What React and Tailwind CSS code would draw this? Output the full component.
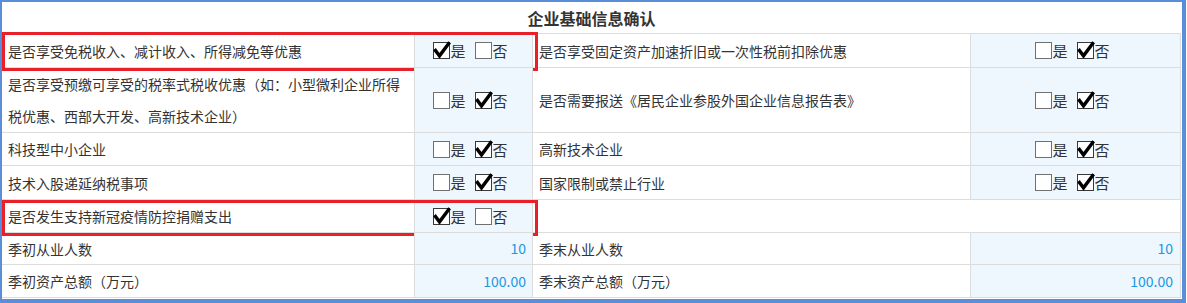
import React from 'react';

const font = "font-['Microsoft_YaHei','Noto_Sans_CJK_SC',sans-serif]";

// single checkbox, drawn like the old IE style box
const Box = ({ checked }) => (
  <span className={`relative inline-block w-[17px] h-[17px] border bg-white ${checked ? 'border-[#3a3a3a]' : 'border-[#707070]'}`}>
    {checked && (
      <svg className="absolute -left-[1px] -top-[1px] overflow-visible" width="17" height="17" viewBox="0 0 17 17">
        <path d="M2.5 8.5 L6.5 13.8 L15.6 1.6" fill="none" stroke="#000" strokeWidth="3.4" strokeLinecap="square" strokeLinejoin="miter" />
      </svg>
    )}
  </span>
);

const YesNo = ({ yes }) => (
  <div className="flex items-center justify-center">
    <Box checked={yes} />
    <span className="ml-[1px] mr-[8px] w-[16px] text-[15px] leading-none">是</span>
    <Box checked={!yes} />
    <span className="ml-[1px] w-[16px] text-[15px] leading-none">否</span>
  </div>
);

const Label = ({ w, children }) => (
  <div className={`${w} h-full border-r border-b border-[#dcdcdc] pl-[6px] flex items-center leading-[32px]`}>
    {children}
  </div>
);

const Check = ({ w, yes }) => (
  <div className={`${w} h-full border-r border-b border-[#dcdcdc] bg-[#eef6fe] flex items-center justify-center pr-[6px]`}>
    <YesNo yes={yes} />
  </div>
);

const Num = ({ w, value, pr }) => (
  <div className={`${w} h-full border-r border-b border-[#dcdcdc] bg-[#eef6fe] flex items-center justify-end ${pr} text-[#1b98e0]`}>
    {value}
  </div>
);

const Row = ({ h, children, red }) => (
  <div className={`relative flex ${h}`}>
    {children}
    {red}
  </div>
);

export default function App() {
  return (
    <div className={`w-[1186px] h-[303px] bg-white border-[#5a8fd8] border-l-2 border-t-2 border-r-4 border-b-4 pr-[1px] pb-[1px] text-[14px] text-[#333] ${font}`}>
      <div className="w-[1179px]">
        <div className="h-[32px] border-b border-[#dcdcdc] flex items-center justify-center text-[16px] font-bold text-[#333]">
          企业基础信息确认
        </div>

        <Row h="h-[34px]" red={<div className="absolute left-0 -top-[2px] w-[536px] h-[39px] border-[3px] border-[#e8202a] pointer-events-none" />}>
          <Label w="w-[413px]">是否享受免税收入、减计收入、所得减免等优惠</Label>
          <Check w="w-[118px]" yes />
          <Label w="w-[438px]">是否享受固定资产加速折旧或一次性税前扣除优惠</Label>
          <Check w="w-[210px]" />
        </Row>

        <Row h="h-[65px]">
          <Label w="w-[413px]">
            <span>是否享受预缴可享受的税率式税收优惠（如：小型微利企业所得<br />税优惠、西部大开发、高新技术企业）</span>
          </Label>
          <Check w="w-[118px]" />
          <Label w="w-[438px]">是否需要报送《居民企业参股外国企业信息报告表》</Label>
          <Check w="w-[210px]" />
        </Row>

        <Row h="h-[33px]">
          <Label w="w-[413px]">科技型中小企业</Label>
          <Check w="w-[118px]" />
          <Label w="w-[438px]">高新技术企业</Label>
          <Check w="w-[210px]" />
        </Row>

        <Row h="h-[34px]">
          <Label w="w-[413px]">技术入股递延纳税事项</Label>
          <Check w="w-[118px]" />
          <Label w="w-[438px]">国家限制或禁止行业</Label>
          <Check w="w-[210px]" />
        </Row>

        <Row h="h-[33px]" red={<div className="absolute left-0 top-0 w-[536px] h-[36px] border-[3px] border-[#e8202a] pointer-events-none" />}>
          <Label w="w-[413px]">是否发生支持新冠疫情防控捐赠支出</Label>
          <Check w="w-[118px]" yes />
          <div className="w-[648px] h-full border-r border-b border-[#dcdcdc]" />
        </Row>

        <Row h="h-[32px]">
          <Label w="w-[413px]">季初从业人数</Label>
          <Num w="w-[118px]" value="10" pr="pr-[6px]" />
          <Label w="w-[438px]">季末从业人数</Label>
          <Num w="w-[210px]" value="10" pr="pr-[7px]" />
        </Row>

        <Row h="h-[33px]">
          <Label w="w-[413px]">季初资产总额（万元）</Label>
          <Num w="w-[118px]" value="100.00" pr="pr-[6px]" />
          <Label w="w-[438px]">季末资产总额（万元）</Label>
          <Num w="w-[210px]" value="100.00" pr="pr-[7px]" />
        </Row>
      </div>
    </div>
  );
}
